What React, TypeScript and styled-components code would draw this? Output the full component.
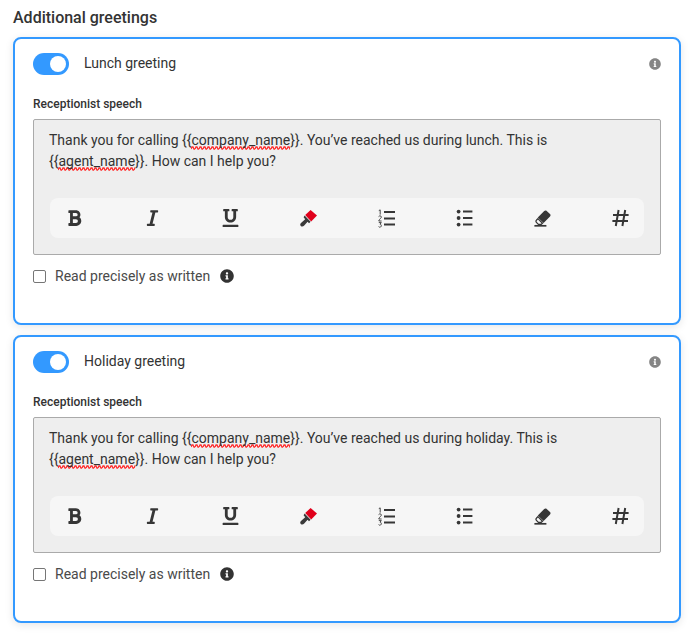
import React from 'react'
import styled, { createGlobalStyle } from 'styled-components'
import { FaBold, FaItalic, FaUnderline, FaInfoCircle } from 'react-icons/fa'

const GlobalStyle = createGlobalStyle`
  html, body { margin: 0; padding: 0; background: #fff; }
  body { font-family: Roboto, "Liberation Sans", sans-serif; color: #333; }
`

const Page = styled.div`
  width: 692px;
  height: 637px;
  box-sizing: border-box;
  padding: 9px 11px 0 13px;
  overflow: hidden;
`

const Heading = styled.h2`
  margin: 0 0 10px;
  font-size: 16px;
  line-height: 18px;
  font-weight: 500;
  color: #333;
`

const Cards = styled.div`
  display: flex;
  flex-direction: column;
  gap: 10px;
`

const Card = styled.section`
  height: 288px;
  box-sizing: border-box;
  padding: 14px 18px 0;
  border: 2px solid #3399ff;
  border-radius: 8px;
  background: #fff;
  box-shadow: 0 2px 8px rgba(0, 0, 0, 0.1);
`

const CardHeader = styled.div`
  display: flex;
  align-items: center;
  height: 22px;
`

const Toggle = styled.span`
  display: flex;
  justify-content: flex-end;
  align-items: center;
  width: 36px;
  height: 22px;
  box-sizing: border-box;
  padding-right: 3px;
  border-radius: 11px;
  background: #3399ff;
  &::after {
    content: '';
    width: 16px;
    height: 16px;
    border-radius: 50%;
    background: #fff;
  }
`

const CardTitle = styled.span`
  margin-left: 15px;
  padding-bottom: 2px;
  font-size: 14px;
  line-height: 20px;
  color: #333;
  flex: 1;
`

const HintIcon = styled.span`
  display: flex;
  color: #858585;
  font-size: 12px;
`

const SpeechLabel = styled.div`
  margin-top: 21px;
  font-size: 12px;
  line-height: 16px;
  font-weight: 500;
  color: #333;
`

const SpeechBox = styled.div`
  margin-top: 7px;
  height: 136px;
  box-sizing: border-box;
  padding: 10px 15px 0;
  border: 1px solid #aaa;
  border-radius: 2px;
  background: #eee;
`

const SpeechText = styled.p`
  margin: 0;
  height: 68px;
  font-size: 14px;
  line-height: 21px;
  color: #333;
`

const Misspelled = styled.span`
  padding-bottom: 2px;
  background: url("data:image/svg+xml,%3Csvg xmlns='http://www.w3.org/2000/svg' width='4' height='4'%3E%3Cpath d='M0 3 1 1 2 1 3 3 4 3' fill='none' stroke='%23ff2a2a' stroke-width='1.3'/%3E%3C/svg%3E") left bottom / 4px 4px repeat-x;
`

const Toolbar = styled.div`
  display: flex;
  justify-content: space-between;
  align-items: center;
  height: 40px;
  box-sizing: border-box;
  margin: 0 1px 0 1px;
  padding: 0 15px 0 16px;
  border-radius: 8px;
  background: #f6f6f6;
`

const ToolIcon = styled.span`
  display: flex;
  justify-content: center;
  width: 17px;
  color: #363636;
  font-size: 18px;
`

const CheckRow = styled.label`
  display: flex;
  align-items: center;
  margin-top: 13px;
  font-size: 14px;
  line-height: 16px;
  color: #4a4a4a;
`

const CheckBox = styled.span`
  width: 13px;
  height: 13px;
  box-sizing: border-box;
  border: 1px solid #767676;
  border-radius: 2px;
  background: #fff;
`

const CheckText = styled.span`
  margin-left: 9px;
`

const CheckHint = styled.span`
  display: flex;
  margin-left: 10px;
  font-size: 14px;
  color: #333;
`

function BrushIcon() {
  return (
    <svg width="17" height="17" viewBox="0 0 17 17">
      <path d="M10.6 0 17 5.6 11.2 11.4 5.2 5Z" fill="#e0001b" />
      <path d="M4.6 5.6 10.6 11.8 9 13.2 7.6 11.8 4 15.8C3.1 16.8 1.6 16.8.8 16 0 15.2 0 13.8 1 13L5.2 9.2 3.6 7.2Z" fill="#3a3a3a" />
    </svg>
  )
}

function OrderedListIcon() {
  return (
    <svg width="17" height="19" viewBox="0 0 17 19" fill="none" stroke="#363636">
      <path d="M6 3H17M6 9.5H17M6 15.5H17" strokeWidth="1.9" />
      <path d="M.8 1.6 2.2.9V5.6M.6 7.6C1 6.6 3.4 6.6 3.4 8 3.4 9 1.4 10 .7 12H3.6M.8 13.6H3.3L2 15.2C3.8 15.2 3.8 18.2 1.8 18.2 1.2 18.2.8 18 .6 17.6" strokeWidth=".9" />
    </svg>
  )
}

function BulletListIcon() {
  return (
    <svg width="17" height="18" viewBox="0 0 17 18" fill="#363636">
      <circle cx="2.6" cy="2.6" r="1.9" />
      <circle cx="2.6" cy="9" r="1.9" />
      <circle cx="2.6" cy="15.6" r="1.9" />
      <path d="M7 2.6H16.4M7 9H16.4M7 15.6H16.4" fill="none" stroke="#363636" strokeWidth="2" />
    </svg>
  )
}

function EraserIcon() {
  return (
    <svg width="17" height="17" viewBox="0 0 17 17" fill="#363636">
      <path d="M10.2 1C10.9.3 12 .3 12.7.9L16 4C16.7 4.7 16.7 5.8 16 6.5L9.6 13 3.8 7.4Z" />
      <path d="M3.9 8.6 8.5 13.2 7.2 14.4H4.4L2.4 12.4C1.8 11.8 1.8 10.8 2.4 10.2Z" fill="none" stroke="#363636" strokeWidth="1.3" />
      <path d="M0.4 15.8H12.4" fill="none" stroke="#363636" strokeWidth="1.7" />
    </svg>
  )
}

function HashIcon() {
  return (
    <svg width="17" height="18" viewBox="0 0 17 18" fill="none" stroke="#363636" strokeWidth="2">
      <path d="M6.6 1 3.8 17M13.2 1 10.4 17M1 6H16.6M.4 12H16" />
    </svg>
  )
}

function Greeting({ title, when }: { title: string; when: string }) {
  return (
    <Card>
      <CardHeader>
        <Toggle />
        <CardTitle>{title}</CardTitle>
        <HintIcon><FaInfoCircle /></HintIcon>
      </CardHeader>
      <SpeechLabel>Receptionist speech</SpeechLabel>
      <SpeechBox>
        <SpeechText>
          Thank you for calling {'{{'}<Misspelled>company_name</Misspelled>{'}}'}. You’ve reached us during {when}. This is{' '}
          {'{{'}<Misspelled>agent_name</Misspelled>{'}}'}. How can I help you?
        </SpeechText>
        <Toolbar>
          <ToolIcon><FaBold /></ToolIcon>
          <ToolIcon><FaItalic /></ToolIcon>
          <ToolIcon><FaUnderline /></ToolIcon>
          <ToolIcon><BrushIcon /></ToolIcon>
          <ToolIcon><OrderedListIcon /></ToolIcon>
          <ToolIcon><BulletListIcon /></ToolIcon>
          <ToolIcon><EraserIcon /></ToolIcon>
          <ToolIcon><HashIcon /></ToolIcon>
        </Toolbar>
      </SpeechBox>
      <CheckRow>
        <CheckBox />
        <CheckText>Read precisely as written</CheckText>
        <CheckHint><FaInfoCircle /></CheckHint>
      </CheckRow>
    </Card>
  )
}

export default function App() {
  return (
    <Page>
      <GlobalStyle />
      <Heading>Additional greetings</Heading>
      <Cards>
        <Greeting title="Lunch greeting" when="lunch" />
        <Greeting title="Holiday greeting" when="holiday" />
      </Cards>
    </Page>
  )
}
